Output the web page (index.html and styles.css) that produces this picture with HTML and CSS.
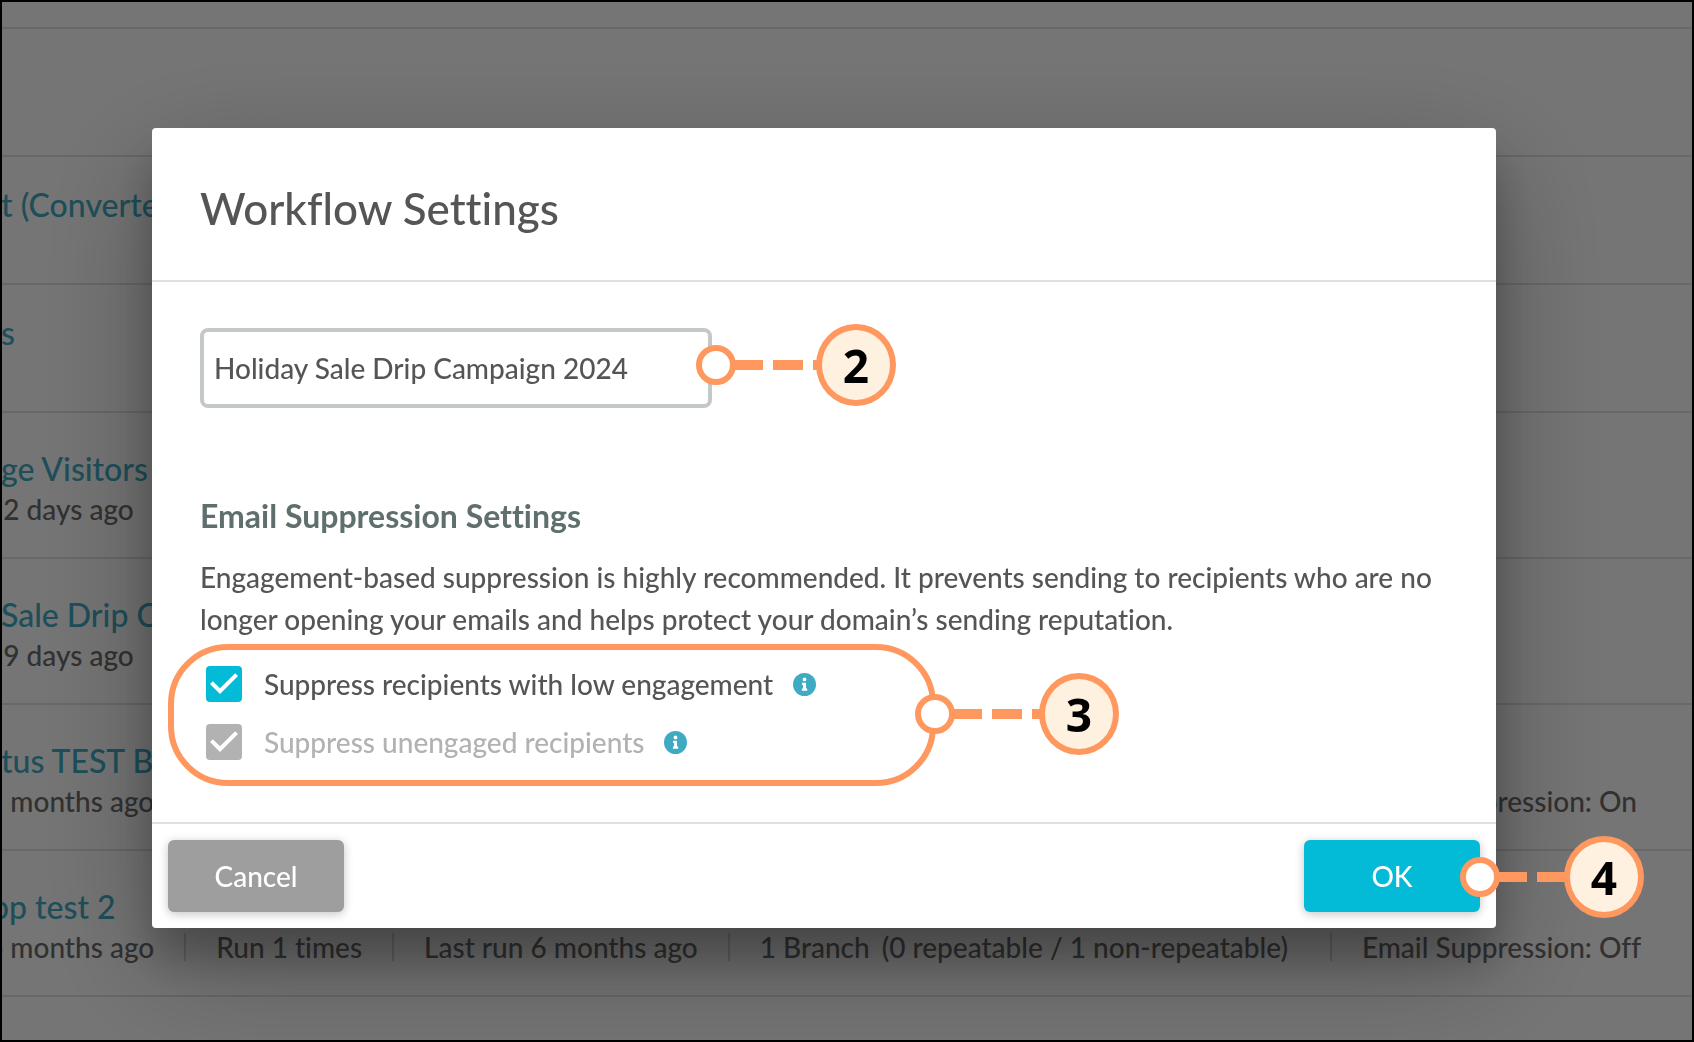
FILE: index.html
```html
<!DOCTYPE html>
<html lang="en">
<head>
    <meta charset="UTF-8">
    <meta name="viewport" content="width=device-width, initial-scale=1.0">
    <title>Workflow Settings</title>
    <link rel="stylesheet" href="styles.css">
</head>
<body>
    <!-- Workflow list behind the dialog -->
    <main class="workflows">
        <div class="row row-top"></div>
        <div class="row"></div>
        <div class="row">
            <a class="row-title" href="#">t (Converted)</a>
        </div>
        <div class="row">
            <a class="row-title" href="#">s</a>
        </div>
        <div class="row row-tall">
            <a class="row-title" href="#">ge Visitors</a>
            <div class="meta"><span>12 days ago</span></div>
        </div>
        <div class="row row-tall">
            <a class="row-title" href="#">Sale Drip C</a>
            <div class="meta"><span>19 days ago</span></div>
        </div>
        <div class="row row-tall">
            <a class="row-title" href="#">tus TEST B</a>
            <div class="meta">
                <span>2 months ago</span>
                <span>Run 1 times</span>
                <span>Last run 2 months ago</span>
                <span class="branches"><span>1 Branch</span><span>(0 repeatable / 1 non-repeatable)</span></span>
                <span>Email Suppression: On</span>
            </div>
        </div>
        <div class="row row-tall">
            <a class="row-title row-title-cut" href="#">pp test 2</a>
            <div class="meta">
                <span>6 months ago</span>
                <span>Run 1 times</span>
                <span>Last run 6 months ago</span>
                <span class="branches"><span>1 Branch</span><span>(0 repeatable / 1 non-repeatable)</span></span>
                <span>Email Suppression: Off</span>
            </div>
        </div>
    </main>

    <div class="overlay">
        <form class="dialog" role="dialog" aria-labelledby="dialog-title">
            <header class="dialog-header">
                <h1 id="dialog-title">Workflow Settings</h1>
            </header>

            <div class="dialog-body">
                <div class="name-field">
                    <input type="text" class="name-input" aria-label="Workflow name" value="Holiday Sale Drip Campaign 2024">
                    <div class="callout callout-name">
                        <span class="dot"></span><span class="line"></span><span class="badge">2</span>
                    </div>
                </div>

                <h2>Email Suppression Settings</h2>
                <p>Engagement-based suppression is highly recommended. It prevents sending to recipients who are no longer opening your emails and helps protect your domain’s sending reputation.</p>

                <div class="options">
                    <div class="option">
                        <input type="checkbox" id="low-engagement" checked>
                        <label for="low-engagement">Suppress recipients with low engagement</label>
                        <svg class="info" viewBox="0 0 24 24">
                            <circle cx="12" cy="12" r="12"/>
                            <path d="M12 4.7a2 2 0 1 1 0 4a2 2 0 0 1 0-4zM9.4 10.2h4.2v6.1h1.2v2.3H9.3v-2.3h1.2v-3.8H9.4z"/>
                        </svg>
                    </div>
                    <div class="option">
                        <input type="checkbox" id="unengaged" checked disabled>
                        <label for="unengaged">Suppress unengaged recipients</label>
                        <svg class="info" viewBox="0 0 24 24">
                            <circle cx="12" cy="12" r="12"/>
                            <path d="M12 4.7a2 2 0 1 1 0 4a2 2 0 0 1 0-4zM9.4 10.2h4.2v6.1h1.2v2.3H9.3v-2.3h1.2v-3.8H9.4z"/>
                        </svg>
                    </div>
                    <div class="highlight">
                        <div class="callout callout-options">
                            <span class="dot"></span><span class="line"></span><span class="badge">3</span>
                        </div>
                    </div>
                </div>
            </div>

            <footer class="dialog-footer">
                <button type="button" class="btn btn-cancel">Cancel</button>
                <div class="ok-wrap">
                    <button type="button" class="btn btn-ok">OK</button>
                    <div class="callout callout-ok">
                        <span class="dot"></span><span class="line"></span><span class="badge">4</span>
                    </div>
                </div>
            </footer>
        </form>
    </div>
</body>
</html>
```
FILE: styles.css
```css
* {
    box-sizing: border-box;
}
body {
    margin: 0;
    font-family: Lato, 'Liberation Sans', sans-serif;
    font-size: 28px;
    font-weight: 500;
    font-variant-ligatures: no-common-ligatures;
    color: #555;
    background: #fff;
}
h1, h2, p {
    margin: 0;
}

/* workflow list */
.workflows {
    height: 100vh;
    padding-left: 1px;
    overflow: hidden;
}
.row {
    height: 128px;
    padding-top: 28px;
    border-bottom: 2px solid #e2e2e2;
    white-space: nowrap;
}
.row-top {
    height: 29px;
    padding-top: 0;
}
.row-tall {
    height: 146px;
    padding-top: 36px;
}
.row-title {
    display: block;
    font-size: 32px;
    line-height: 40px;
    color: #3fabc3;
    text-decoration: none;
}
.row-title-cut {
    margin-left: -10px;
}
.meta {
    display: flex;
    align-items: center;
    margin-left: -14px;
    line-height: 40px;
    color: #6c6c6c;
}
.meta > span + span {
    display: flex;
    align-items: center;
}
.meta > span + span::before {
    content: "";
    width: 2px;
    height: 28px;
    margin: 0 30px;
    background: #d8d8d8;
}
.branches span {
    margin-right: 12px;
}

/* dialog */
.overlay {
    position: fixed;
    inset: 0;
    padding: 126px 196px 0 150px;
    border: 2px solid #000;
    background: rgba(0, 0, 0, 0.54);
    overflow: hidden;
}
.dialog {
    background: #fff;
    border-radius: 4px;
    box-shadow: 0 38px 120px rgba(0, 0, 0, 0.3), 0 30px 40px rgba(0, 0, 0, 0.22);
}
.dialog-header {
    padding: 48px 48px 40px;
    border-bottom: 2px solid #e0e0e0;
}
.dialog-header h1 {
    font-size: 44px;
    font-weight: 500;
    line-height: 64px;
}
.dialog-body {
    padding: 46px 48px 51px;
}
.dialog-body h2 {
    margin: 88px 0 20px;
    font-size: 32px;
    font-weight: 700;
    line-height: 40px;
    color: #5f6f6e;
}
.dialog-body p {
    line-height: 42px;
}
.name-field {
    position: relative;
    width: 512px;
}
.name-input {
    display: block;
    width: 100%;
    height: 80px;
    padding: 0 10px;
    border: 4px solid #c3c9c8;
    border-radius: 8px;
    background: #fff;
    font: inherit;
    color: inherit;
}
.options {
    position: relative;
    margin-top: 15px;
}
.option {
    display: flex;
    align-items: center;
    height: 58px;
    padding-left: 6px;
}
.option input {
    appearance: none;
    width: 36px;
    height: 36px;
    margin: 0 22px 0 0;
    border-radius: 4px;
    background: #03bbd6 url("data:image/svg+xml,%3Csvg xmlns='http://www.w3.org/2000/svg' viewBox='3 3 18 18'%3E%3Cpath fill='%23fff' d='M10 17l-5-5 1.41-1.41L10 14.17l7.59-7.59L19 8z'/%3E%3C/svg%3E");
}
.option input:disabled {
    background-color: #b2b2b2;
}
.option input:disabled + label {
    color: #b2b2b2;
}
.info {
    width: 23px;
    height: 23px;
    margin-left: 20px;
}
.info circle {
    fill: #3fabc3;
}
.info path {
    fill: #fff;
}
.dialog-footer {
    display: flex;
    justify-content: space-between;
    padding: 16px;
    border-top: 2px solid #e0e0e0;
}
.ok-wrap {
    position: relative;
}
.btn {
    display: block;
    width: 176px;
    height: 72px;
    border: none;
    border-radius: 6px;
    box-shadow: 0 2px 12px rgba(0, 0, 0, 0.12), 0 2px 8px rgba(0, 0, 0, 0.12);
    font: inherit;
    color: #fff;
    cursor: pointer;
}
.btn-cancel {
    background: #9e9e9e;
}
.btn-ok {
    background: #03bbd6;
}

/* numbered callouts */
.highlight {
    position: absolute;
    top: -11px;
    left: -32px;
    width: 768px;
    height: 142px;
    border: 6px solid #ff985e;
    border-radius: 60px;
    pointer-events: none;
}
.callout {
    position: absolute;
    display: flex;
    align-items: center;
}
.callout-name {
    top: -4px;
    left: 496px;
    width: 200px;
}
.callout-options {
    top: 23px;
    left: 741px;
    width: 204px;
}
.callout-ok {
    top: -4px;
    left: 156px;
    width: 184px;
}
.dot {
    position: relative;
    width: 40px;
    height: 40px;
    border: 6px solid #ff985e;
    border-radius: 50%;
    background: #fff;
}
.line {
    flex: 1;
    height: 10px;
    margin: 0 -4px 0 -3px;
    background: repeating-linear-gradient(to right, #ff985e 0 30px, transparent 30px 40px);
}
.badge {
    position: relative;
    width: 80px;
    height: 82px;
    border: 6px solid #ff985e;
    border-radius: 50%;
    background: #fff1e0;
    font-family: 'Open Sans', 'Noto Sans', sans-serif;
    font-size: 46px;
    font-weight: 700;
    line-height: 70px;
    text-align: center;
    color: #000;
}
```
